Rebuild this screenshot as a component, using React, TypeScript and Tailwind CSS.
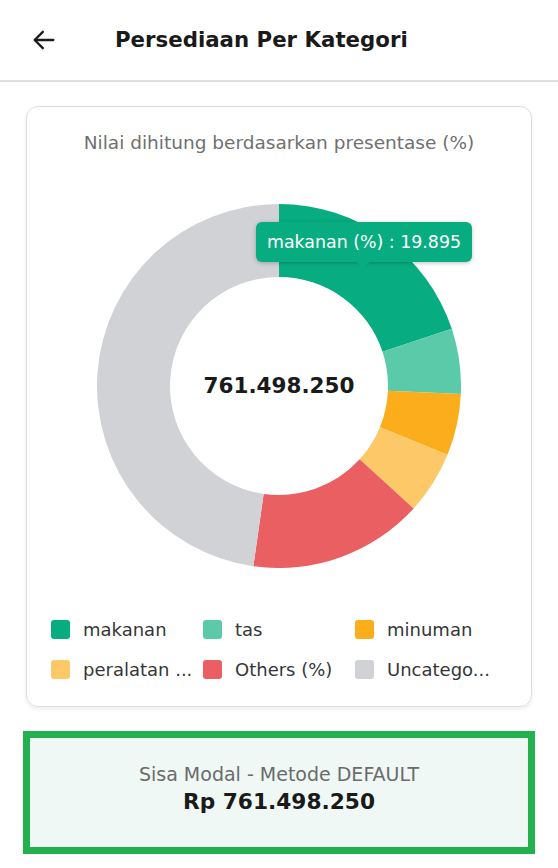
import React from "react";

const CX = 182;
const CY = 182;
const RO = 182;
const RI = 109;

type Seg = { label: string; color: string; start: number; end: number };

const segs: Seg[] = [
  { label: "makanan", color: "#07ad80", start: 0, end: 71.7 },
  { label: "tas", color: "#5bcaa9", start: 71.7, end: 92.5 },
  { label: "minuman", color: "#fbad1b", start: 92.5, end: 112.2 },
  { label: "peralatan ...", color: "#fdc868", start: 112.2, end: 132.3 },
  { label: "Others (%)", color: "#e95f62", start: 132.3, end: 188.1 },
  { label: "Uncatego...", color: "#d1d2d5", start: 188.1, end: 360 },
];

function pt(r: number, a: number) {
  const rad = (a * Math.PI) / 180;
  return [CX + r * Math.sin(rad), CY - r * Math.cos(rad)];
}

function arc(s: number, e: number) {
  const large = e - s > 180 ? 1 : 0;
  const [x1, y1] = pt(RO, s);
  const [x2, y2] = pt(RO, e);
  const [x3, y3] = pt(RI, e);
  const [x4, y4] = pt(RI, s);
  return `M${x1} ${y1} A${RO} ${RO} 0 ${large} 1 ${x2} ${y2} L${x3} ${y3} A${RI} ${RI} 0 ${large} 0 ${x4} ${y4} Z`;
}

export default function App() {
  const font = { fontFamily: '"DejaVu Sans", "Open Sans", sans-serif' };
  return (
    <div className="w-[558px] h-[868px] bg-white overflow-hidden" style={font}>
      <div className="h-[82px] flex items-center border-b-2 border-[#e0e0e0] pl-[30px]">
        <svg width="28" height="28" viewBox="0 0 24 24" fill="none" stroke="#1a1a1a" strokeWidth="2" strokeLinecap="round" strokeLinejoin="round">
          <path d="M20 12H4.5" />
          <path d="M11 5l-7 7 7 7" />
        </svg>
        <div className="ml-[57px] text-[21.3px] font-bold text-[#1a1a1a]">Persediaan Per Kategori</div>
      </div>

      <div className="mx-[26px] mt-[24px] h-[601px] rounded-[12px] border border-[#dedede] shadow-[0_2px_4px_rgba(0,0,0,0.08)] flex flex-col items-center">
        <div className="mt-[24px] text-[18.5px] leading-[24px] text-[#707070] whitespace-nowrap">Nilai dihitung berdasarkan presentase (%)</div>
        <div className="relative mt-[49px] w-[364px] h-[364px]">
          <svg width="364" height="364" viewBox="0 0 364 364">
            {segs.map((s) => (
              <path key={s.label} d={arc(s.start, s.end)} fill={s.color} />
            ))}
          </svg>
          <div className="absolute inset-0 flex items-center justify-center text-[21.5px] font-bold text-[#1a1a1a]">761.498.250</div>
          <div className="absolute left-[159px] top-[18px] h-[40px] w-[216px] rounded-[6px] bg-[#07ad80] shadow-[0_1px_4px_rgba(0,0,0,0.25)] flex items-center justify-center text-white text-[17.4px] whitespace-nowrap">
            makanan (%) : 19.895
            <div className="absolute left-[100px] bottom-[-6px] w-0 h-0 border-l-[7px] border-r-[7px] border-t-[6px] border-l-transparent border-r-transparent border-t-[#07ad80]" />
          </div>
        </div>
        <div className="mt-[52px] w-full px-[24px] grid grid-cols-3 gap-y-[21px]">
          {segs.map((s) => (
            <div key={s.label} className="flex items-center h-[19px]">
              <div className="w-[19px] h-[19px] rounded-[3px] shrink-0" style={{ backgroundColor: s.color }} />
              <div className="ml-[13px] text-[18px] text-[#363636] whitespace-nowrap">{s.label}</div>
            </div>
          ))}
        </div>
      </div>

      <div className="mx-[23px] mt-[24px] h-[123px] border-[7px] border-[#22b14c] bg-[#eff8f5] flex flex-col items-center justify-center pb-[6px]">
        <div className="text-[19px] text-[#6b6b6b] leading-[24px] whitespace-nowrap">Sisa Modal - Metode DEFAULT</div>
        <div className="text-[21.7px] font-bold text-[#1a1a1a] leading-[32px] whitespace-nowrap">Rp 761.498.250</div>
      </div>
    </div>
  );
}
